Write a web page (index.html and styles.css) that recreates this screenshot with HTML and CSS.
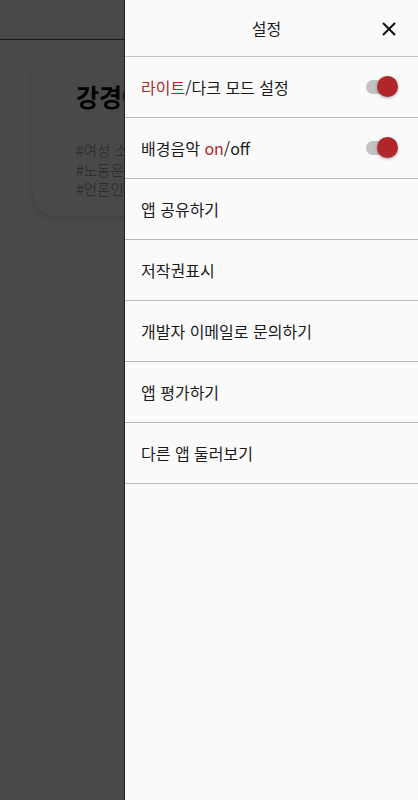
FILE: index.html
```html
<!DOCTYPE html>
<html lang="ko">
<head>
<meta charset="utf-8">
<link rel="stylesheet" href="styles.css">
</head>
<body>
<div class="page">
  <header class="appbar"></header>
  <div class="card">
    <h1 class="card-title">강경애</h1>
    <div class="tags">
      <p>#여성 소설가</p>
      <p>#노동운동</p>
      <p>#언론인</p>
    </div>
  </div>
</div>
<div class="overlay"></div>
<aside class="drawer">
  <div class="drawer-head">
    <span class="drawer-title">설정</span>
    <svg class="close" width="16" height="16" viewBox="0 0 16 16"><path d="M2 2L14 14M14 2L2 14" stroke="#111" stroke-width="2" fill="none"/></svg>
  </div>
  <div class="row"><span><span class="red">라이트</span>/다크 모드 설정</span><span class="switch"><span class="track"></span><span class="thumb"></span></span></div>
  <div class="row"><span>배경음악 <span class="red">on</span>/off</span><span class="switch"><span class="track"></span><span class="thumb"></span></span></div>
  <div class="row"><span>앱 공유하기</span></div>
  <div class="row"><span>저작권표시</span></div>
  <div class="row"><span>개발자 이메일로 문의하기</span></div>
  <div class="row"><span>앱 평가하기</span></div>
  <div class="row"><span>다른 앱 둘러보기</span></div>
</aside>
</body>
</html>
```

FILE: styles.css
```css
html, body {
  margin: 0;
  padding: 0;
  width: 418px;
  height: 800px;
  overflow: hidden;
  background: #fafafa;
  font-family: "Noto Sans CJK KR", "Noto Sans", sans-serif;
}
.page {
  height: 800px;
}
.appbar {
  height: 40px;
  border-bottom: 1px solid #555;
  box-sizing: border-box;
  background: #fafafa;
}
.card {
  margin: 17px 0 0 33px;
  width: 360px;
  height: 159px;
  box-sizing: border-box;
  border-radius: 22px;
  background: #fcfcfc;
  box-shadow: 0 2px 6px rgba(0,0,0,0.12);
  padding: 21px 0 0 43px;
}
.card-title {
  margin: 0;
  font-size: 25px;
  font-weight: bold;
  line-height: 36px;
  color: #000;
}
.tags {
  margin-top: 26px;
  font-size: 14.5px;
  font-weight: 300;
  color: #8a8a8a;
}
.tags p {
  margin: 0;
  line-height: 19.5px;
}
.overlay {
  position: fixed;
  inset: 0;
  background: rgba(0,0,0,0.71);
}
.drawer {
  position: fixed;
  top: 0;
  right: 0;
  width: 294px;
  height: 800px;
  box-sizing: border-box;
  border-left: 1px solid #222;
  background: #fafafa;
  color: #1a1a1a;
}
.drawer-head {
  height: 57px;
  box-sizing: border-box;
  border-bottom: 1px solid #c4c4c4;
  display: flex;
  align-items: center;
  justify-content: center;
  position: relative;
  padding-right: 10px;
}
.drawer-title {
  font-size: 16px;
}
.close {
  position: absolute;
  right: 21px;
  top: 21px;
}
.row {
  height: 61px;
  box-sizing: border-box;
  border-bottom: 1px solid #b8b8b8;
  display: flex;
  align-items: center;
  justify-content: space-between;
  padding: 0 18px 0 16px;
  font-size: 16px;
}
.red {
  color: #b1262b;
}
.switch {
  position: relative;
  width: 34px;
  height: 22px;
  display: block;
}
.track {
  position: absolute;
  left: 0;
  top: 4px;
  width: 24px;
  height: 14px;
  border-radius: 7px;
  background: #c2c2c2;
}
.thumb {
  position: absolute;
  right: 2px;
  top: 0;
  width: 21px;
  height: 21px;
  border-radius: 50%;
  background: #b1262b;
  box-shadow: 0 1px 3px rgba(0,0,0,0.35);
}
```
